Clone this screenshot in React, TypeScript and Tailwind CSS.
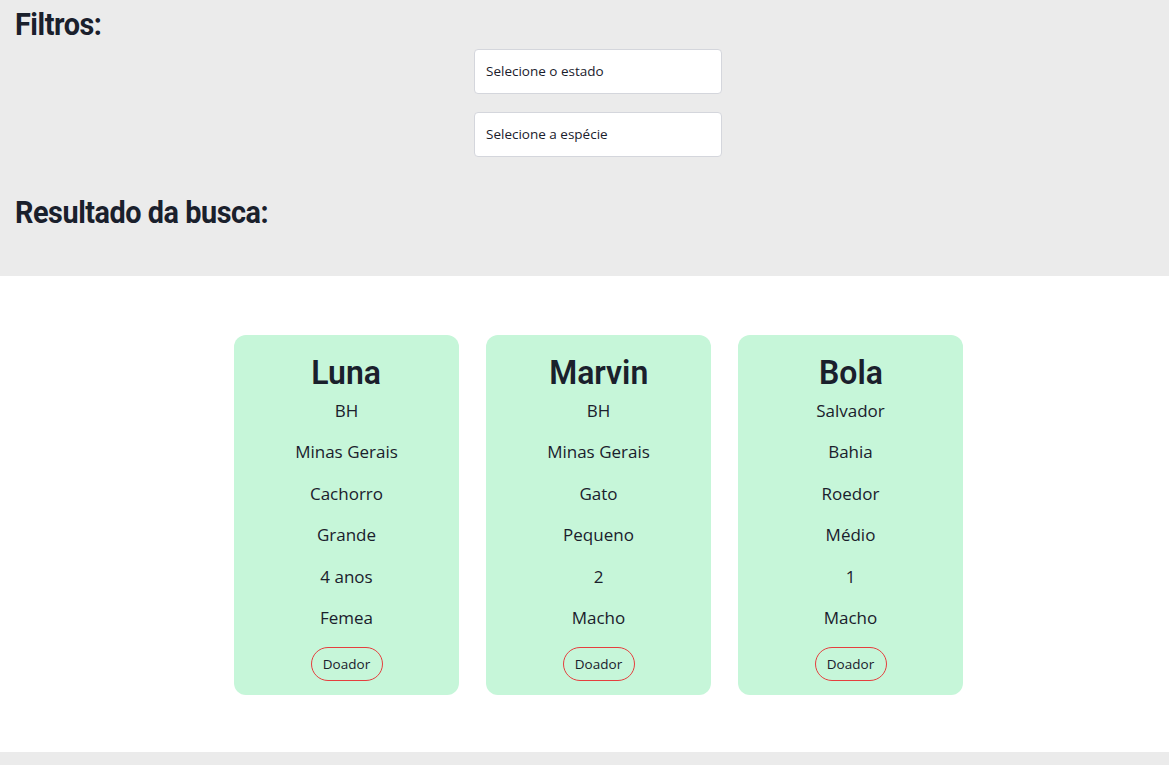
const pets = [
  { name: 'Luna', city: 'BH', state: 'Minas Gerais', species: 'Cachorro', size: 'Grande', age: '4 anos', sex: 'Femea' },
  { name: 'Marvin', city: 'BH', state: 'Minas Gerais', species: 'Gato', size: 'Pequeno', age: '2', sex: 'Macho' },
  { name: 'Bola', city: 'Salvador', state: 'Bahia', species: 'Roedor', size: 'Médio', age: '1', sex: 'Macho' },
];

const heading = { fontFamily: '"Roboto", sans-serif' };

export default function App() {
  return (
    <div className="min-h-[765px] bg-[#ebebeb] text-[#1a202c]" style={{ fontFamily: '"Open Sans", "Noto Sans", sans-serif' }}>
      {/* Filtros */}
      <div className="px-[15px] pt-[5px] pb-[45px]">
        <h2
          className="inline-block origin-left scale-x-[0.9] text-[32px] font-bold leading-[38px] tracking-[-0.5px]"
          style={heading}
        >
          Filtros:
        </h2>
        <div className="ml-[459px] mt-[6px] flex w-[248px] flex-col gap-[18px]">
          <select className="h-[45px] appearance-none rounded-[4px] border border-[#d4d6dc] bg-white px-[11px] text-[13.5px]">
            <option>Selecione o estado</option>
          </select>
          <select className="h-[45px] appearance-none rounded-[4px] border border-[#d4d6dc] bg-white px-[11px] text-[13.5px]">
            <option>Selecione a espécie</option>
          </select>
        </div>
        <div className="mt-[36px]">
          <h2
            className="inline-block origin-left scale-x-[0.9] text-[32px] font-bold leading-[38px] tracking-[-0.5px]"
            style={heading}
          >
            Resultado da busca:
          </h2>
        </div>
      </div>

      {/* Resultados */}
      <div className="flex h-[476px] justify-center gap-[27px] bg-white pt-[59px] pl-[28px]">
        {pets.map((p) => (
          <div key={p.name} className="flex h-[360px] w-[225px] flex-col items-center rounded-[12px] bg-[#c6f6d9] pt-[17px]">
            <h3 className="scale-x-[0.94] text-[34px] font-semibold leading-[40px]" style={heading}>
              {p.name}
            </h3>
            <div className="mt-[7px] flex flex-col items-center gap-[17.4px]">
              {[p.city, p.state, p.species, p.size, p.age, p.sex].map((v, i) => (
                <p key={i} className="text-[17px] leading-[24px]">
                  {v}
                </p>
              ))}
            </div>
            <button className="mt-[17px] h-[34px] w-[72px] rounded-full border border-[#e53e3e] text-[13.5px]">
              Doador
            </button>
          </div>
        ))}
      </div>
    </div>
  );
}
